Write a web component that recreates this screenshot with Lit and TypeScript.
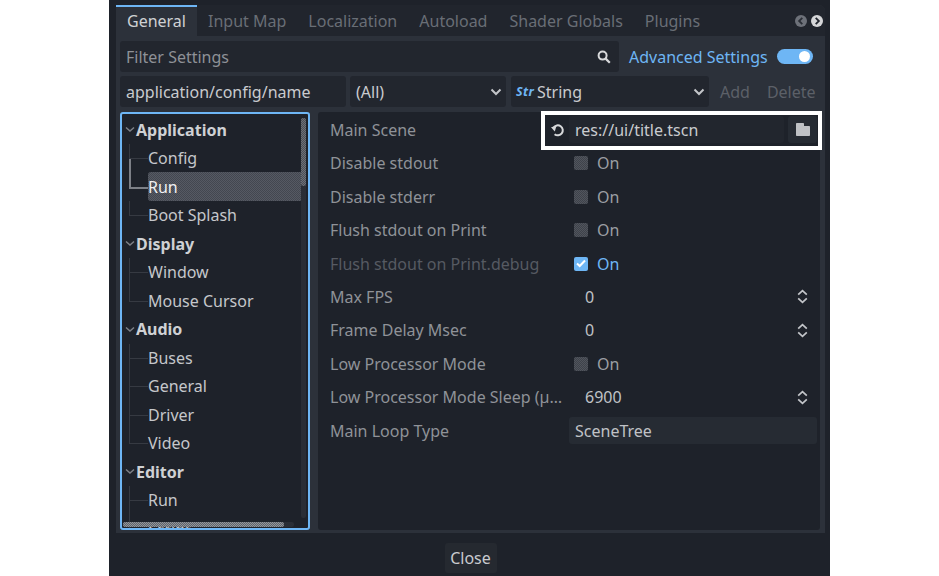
import { LitElement, html, css } from "lit";
import { customElement } from "lit/decorators.js";

const chevron = html`<svg class="chev" width="12" height="8" viewBox="0 0 12 8"><path d="M1.5 1.5 6 6l4.5-4.5" fill="none" stroke="#c3c5c9" stroke-width="2"/></svg>`;
const updown = html`<svg class="updown" width="11" height="15" viewBox="0 0 11 15"><path d="M1.2 5.6 5.5 1.6l4.3 4M1.2 9.4l4.3 4 4.3-4" fill="none" stroke="#c3c5c9" stroke-width="1.7"/></svg>`;

interface TreeGroup { name: string; items: string[]; }
const groups: TreeGroup[] = [
  { name: "Application", items: ["Config", "Run", "Boot Splash"] },
  { name: "Display", items: ["Window", "Mouse Cursor"] },
  { name: "Audio", items: ["Buses", "General", "Driver", "Video"] },
  { name: "Editor", items: ["Run", "Script"] },
];

@customElement("app-root")
export class AppRoot extends LitElement {
  static styles = css`
    :host { display: block; width: 939px; height: 576px; background: #fff; font-family: "Noto Sans", sans-serif; font-size: 16px; color: #c9cbcf; overflow: hidden; }
    * { box-sizing: border-box; }
    .window { margin-left: 109px; width: 721px; height: 576px; background: #1e222a; padding: 5px 5px 0 7px; display: flex; flex-direction: column; }
    .panel { height: 528px; display: flex; flex-direction: column; background: #2c313a; border-radius: 0 6px 0 0; }
    .tabs { height: 31px; display: flex; align-items: stretch; background: #21252d; border-radius: 0 6px 0 0; }
    .tab { padding: 1px 11px 0; line-height: 30px; color: #696e76; white-space: nowrap; }
    .tab.on { color: #cfd1d4; background: #2c313a; border-top: 2px solid #6eb6f5; line-height: 28px; padding-top: 0; width: 81px; }
    .nav { margin-left: auto; display: flex; gap: 4px; align-items: center; padding-right: 2px; }
    .nav svg { display: block; }
    .body { flex: 1; min-height: 0; padding: 5px 4px 3px; display: flex; flex-direction: column; gap: 4px; }
    .bar { height: 31px; display: flex; gap: 4px; align-items: stretch; flex: none; }
    .field { background: #22262e; border-radius: 3px; display: flex; align-items: center; padding: 0 6px; white-space: nowrap; }
    .filter { width: 499px; justify-content: space-between; color: #8e9197; padding-right: 8px; }
    .adv { display: flex; align-items: center; color: #6eb6f5; padding-left: 6px; gap: 9px; }
    .toggle { width: 36px; height: 15px; border-radius: 8px; background: #6eb6f5; position: relative; display: block; }
    .toggle::after { content: ""; position: absolute; right: 3px; top: 2px; width: 11px; height: 11px; border-radius: 50%; background: #fff; }
    .name { width: 226px; }
    .all { width: 156px; justify-content: space-between; padding-right: 4px; }
    .type { width: 198px; margin-left: 1px; padding: 0 5px; gap: 3px; }
    .type .chev { margin-left: auto; margin-right: -1px; }
    .str { color: #6eb6f5; font-size: 12.5px; font-weight: 700; font-style: italic; width: 18px; letter-spacing: 0.4px; }
    .act { color: #5c6068; display: flex; align-items: center; gap: 17px; padding-left: 7px; }
    .split { flex: 1; min-height: 0; display: flex; gap: 8px; margin-top: 1px; }
    .tree { width: 190px; height: 418px; background: #1e222a; border: 2px solid #6eb6f5; border-radius: 3px; position: relative; overflow: hidden; padding-top: 1.5px; }
    .row { height: 28.5px; line-height: 28.5px; white-space: nowrap; }
    .head { font-weight: 700; display: flex; align-items: center; padding-left: 3px; gap: 1px; color: #cfd1d4; }
    .head svg { flex: none; }
    .kid { margin-left: 7px; padding-left: 19px; position: relative; color: #c5c7cb; }
    .kid::before { content: ""; position: absolute; left: 0; top: 0; bottom: 0; width: 1px; background: #363a42; }
    .kid::after { content: ""; position: absolute; left: 0; top: 14px; width: 19px; height: 1px; background: #363a42; }
    .kid.last::before { bottom: 14px; }
    .kid.sel { color: #f0f1f2; }
    .kid.sel::before { background: #7d8087; bottom: 13px; top: -14px; width: 2px; z-index: 1; }
    .kid.sel::after { background: #7d8087; top: 14px; height: 2px; z-index: 1; }
    .hl { position: absolute; left: 26px; right: 2px; top: 58px; height: 29px; border-radius: 3px 0 0 3px; background: repeating-conic-gradient(#565a63 0 25%, #434750 0 50%) 0 0 / 2px 2px; }
    .rowtext { position: relative; }
    .vs { position: absolute; right: 2px; top: 4px; bottom: 10px; width: 5px; background: #2a2e36; border-radius: 2px; }
    .vs i { display: block; width: 5px; height: 68px; border-radius: 2px; background: repeating-conic-gradient(#6d7078 0 25%, #4a4e56 0 50%) 0 0 / 2px 2px; }
    .hs { position: absolute; left: 1px; right: 14px; bottom: 1px; height: 5px; background: #2a2e36; border-radius: 2px; }
    .hs i { display: block; width: 161px; height: 5px; border-radius: 2px; background: repeating-conic-gradient(#92959a 0 25%, #5f636a 0 50%) 0 0 / 2px 2px; }
    .props { width: 502px; height: 418px; background: #1e222a; border-radius: 3px; position: relative; padding-top: 1.3px; }
    .p { height: 33.4px; display: grid; grid-template-columns: 251px 248px; align-items: center; }
    .lab { padding-left: 12px; padding-right: 5px; color: #8f9298; white-space: nowrap; overflow: hidden; text-overflow: ellipsis; }
    .lab.dim { color: #565a62; }
    .val { display: flex; align-items: center; height: 100%; white-space: nowrap; }
    .check { padding-left: 5px; gap: 9px; color: #9b9ea3; }
    .box { width: 14px; height: 14px; border-radius: 2px; display: block; background: repeating-conic-gradient(#51555d 0 25%, #3e424a 0 50%) 0 0 / 2px 2px; }
    .box.on { background: #6eb6f5; display: flex; align-items: center; justify-content: center; }
    .on-t { color: #6eb6f5; }
    .num { padding: 0 9px 0 16px; justify-content: space-between; color: #c0c2c6; }
    .txt { background: #262b33; border-radius: 3px; height: 27px; padding-left: 6px; color: #c0c2c6; }
    .scene { margin-left: -18px; gap: 4px; align-items: center; }
    .scene svg.reset { flex: none; }
    .path { width: 215px; height: 27px; background: #22262e; border-radius: 3px; display: flex; align-items: center; padding-left: 6px; color: #c9cbcf; }
    .folder { width: 29px; height: 27px; background: #262b33; border-radius: 3px; display: flex; align-items: center; justify-content: center; flex: none; }
    .mark { position: absolute; left: 223px; top: -1px; width: 281px; height: 39px; border: 4px solid #fff; pointer-events: none; }
    .foot { flex: 1; display: flex; justify-content: center; align-items: flex-start; padding-top: 10px; }
    .close { width: 52px; height: 30px; background: #252930; border-radius: 3px; text-align: center; line-height: 30px; color: #c9cbcf; }
  `;

  private check(on = false) {
    return html`<div class="val check ${on ? "on-t" : ""}"><span class="box ${on ? "on" : ""}">${on
      ? html`<svg width="10" height="9" viewBox="0 0 10 9"><path d="M1 4.5 3.7 7 9 1.5" fill="none" stroke="#fff" stroke-width="2"/></svg>`
      : ""}</span>On</div>`;
  }
  private num(v: string) { return html`<div class="val num"><span>${v}</span>${updown}</div>`; }

  private tree() {
    return groups.map((g) => html`
      <div class="row head"><svg width="10" height="7" viewBox="0 0 10 7"><path d="M1 1.5 5 5l4-3.5" fill="none" stroke="#7d8087" stroke-width="1.5"/></svg>${g.name}</div>
      ${g.items.map((it, i) => {
        const sel = g.name === "Application" && it === "Run";
        const last = i === g.items.length - 1;
        return html`<div class="row kid ${sel ? "sel" : ""} ${last ? "last" : ""}"><span class="rowtext">${it}</span></div>`;
      })}`);
  }

  render() {
    return html`<div class="window">
      <div class="panel">
        <div class="tabs">
          <div class="tab on">General</div>
          <div class="tab">Input Map</div>
          <div class="tab">Localization</div>
          <div class="tab">Autoload</div>
          <div class="tab">Shader Globals</div>
          <div class="tab">Plugins</div>
          <div class="nav">
            <svg width="12" height="12" viewBox="0 0 12 12"><circle cx="6" cy="6" r="6" fill="#6d7179"/><path d="M7.3 2.8 4.1 6l3.2 3.2" fill="none" stroke="#2a2e36" stroke-width="1.8"/></svg>
            <svg width="12" height="12" viewBox="0 0 12 12"><circle cx="6" cy="6" r="6" fill="#d5d6d8"/><path d="M4.7 2.8 7.9 6 4.7 9.2" fill="none" stroke="#22262e" stroke-width="1.8"/></svg>
          </div>
        </div>
        <div class="body">
          <div class="bar">
            <div class="field filter">Filter Settings
              <svg width="14" height="14" viewBox="0 0 14 14"><circle cx="5.6" cy="5.6" r="4" fill="none" stroke="#d8d9db" stroke-width="2"/><path d="m8.6 8.6 4.2 4.2" stroke="#d8d9db" stroke-width="2.2"/></svg>
            </div>
            <div class="adv">Advanced Settings<span class="toggle"></span></div>
          </div>
          <div class="bar">
            <div class="field name">application/config/name</div>
            <div class="field all">(All)${chevron}</div>
            <div class="field type"><span class="str">Str</span>String${chevron}</div>
            <div class="act"><span>Add</span><span>Delete</span></div>
          </div>
          <div class="split">
            <div class="tree">
              <div class="hl"></div>
              ${this.tree()}
              <div class="vs"><i></i></div>
              <div class="hs"><i></i></div>
            </div>
            <div class="props">
              <div class="p"><div class="lab">Main Scene</div>
                <div class="val scene">
                  <svg class="reset" width="14" height="14" viewBox="0 0 14 14"><path d="M3.6 11.2A5 5 0 1 0 2.6 4.6" fill="none" stroke="#d8d9db" stroke-width="2"/><path d="M0 4.2 5.4 3 3.8 8.4z" fill="#d8d9db"/></svg>
                  <div class="path">res://ui/title.tscn</div>
                  <div class="folder"><svg width="14" height="13" viewBox="0 0 14 13"><path d="M0 1c0-.6.4-1 1-1h6c.6 0 1 .4 1 1v2h5c.6 0 1 .4 1 1v8c0 .6-.4 1-1 1H1c-.6 0-1-.4-1-1z" fill="#bfc1c5"/></svg></div>
                </div>
              </div>
              <div class="p"><div class="lab">Disable stdout</div>${this.check()}</div>
              <div class="p"><div class="lab">Disable stderr</div>${this.check()}</div>
              <div class="p"><div class="lab">Flush stdout on Print</div>${this.check()}</div>
              <div class="p"><div class="lab dim">Flush stdout on Print.debug</div>${this.check(true)}</div>
              <div class="p"><div class="lab">Max FPS</div>${this.num("0")}</div>
              <div class="p"><div class="lab">Frame Delay Msec</div>${this.num("0")}</div>
              <div class="p"><div class="lab">Low Processor Mode</div>${this.check()}</div>
              <div class="p"><div class="lab">Low Processor Mode Sleep (µsec)</div>${this.num("6900")}</div>
              <div class="p"><div class="lab">Main Loop Type</div><div class="val txt">SceneTree</div></div>
              <div class="mark"></div>
            </div>
          </div>
        </div>
      </div>
      <div class="foot"><div class="close">Close</div></div>
    </div>`;
  }
}
